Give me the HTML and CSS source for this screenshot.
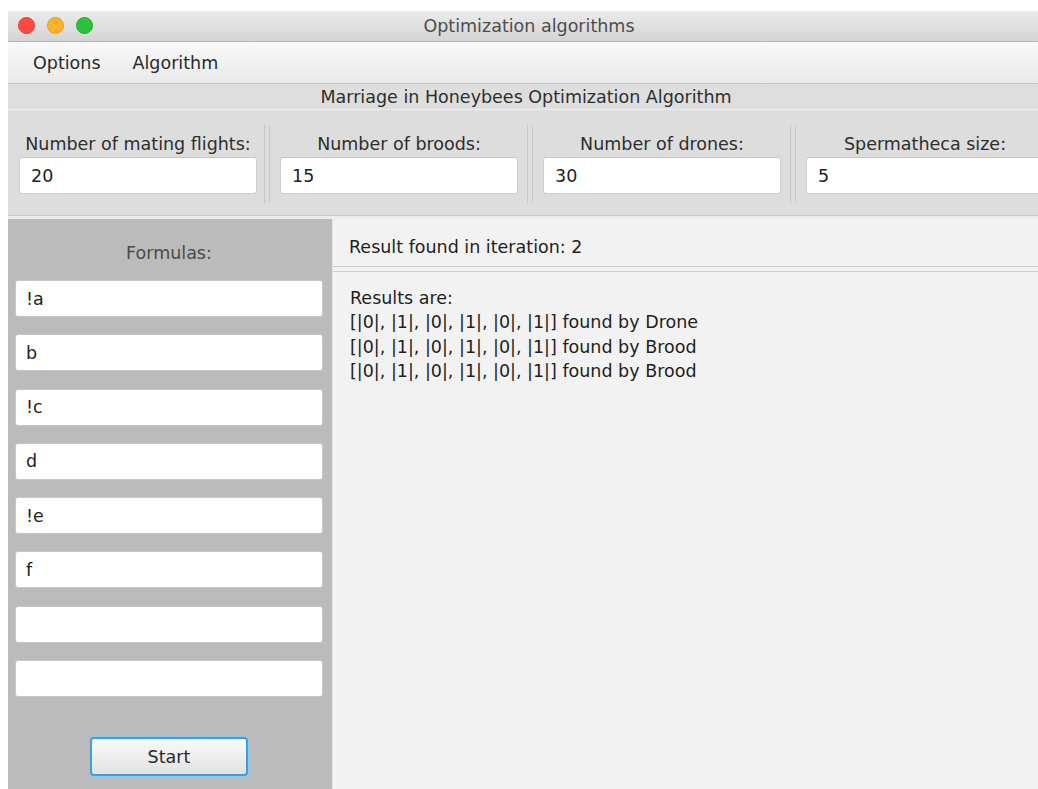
FILE: index.html
```html
<!DOCTYPE html>
<html lang="en">
<head>
<meta charset="utf-8">
<title>Optimization algorithms</title>
<link rel="stylesheet" href="styles.css">
</head>
<body>
<div class="window">
  <div class="titlebar">
    <div class="lights">
      <span class="light red"></span>
      <span class="light yellow"></span>
      <span class="light green"></span>
    </div>
    <div class="title">Optimization algorithms</div>
  </div>

  <div class="menubar">
    <span class="menu-item">Options</span>
    <span class="menu-item">Algorithm</span>
  </div>

  <div class="subtitle">Marriage in Honeybees Optimization Algorithm</div>

  <div class="params">
    <div class="param first">
      <div class="param-box">
        <label class="param-label">Number of mating flights:</label>
        <input class="field" type="text" value="20" readonly>
      </div>
    </div>
    <div class="param sep">
      <div class="param-box">
        <label class="param-label">Number of broods:</label>
        <input class="field" type="text" value="15" readonly>
      </div>
    </div>
    <div class="param sep">
      <div class="param-box">
        <label class="param-label">Number of drones:</label>
        <input class="field" type="text" value="30" readonly>
      </div>
    </div>
    <div class="param sep">
      <div class="param-box">
        <label class="param-label">Spermatheca size:</label>
        <input class="field" type="text" value="5" readonly>
      </div>
    </div>
  </div>
  <div class="params-rule"></div>

  <div class="main">
    <aside class="formulas">
      <div class="formulas-label">Formulas:</div>
      <div class="formula-list">
        <input class="field formula" type="text" value="!a" readonly>
        <input class="field formula" type="text" value="b" readonly>
        <input class="field formula" type="text" value="!c" readonly>
        <input class="field formula" type="text" value="d" readonly>
        <input class="field formula" type="text" value="!e" readonly>
        <input class="field formula" type="text" value="f" readonly>
        <input class="field formula" type="text" value="" readonly>
        <input class="field formula" type="text" value="" readonly>
      </div>
      <button class="start" type="button">Start</button>
    </aside>

    <section class="results">
      <div class="results-head">Result found in iteration: 2</div>
      <div class="results-body">
        <div>Results are:</div>
        <div>[|0|, |1|, |0|, |1|, |0|, |1|] found by Drone</div>
        <div>[|0|, |1|, |0|, |1|, |0|, |1|] found by Brood</div>
        <div>[|0|, |1|, |0|, |1|, |0|, |1|] found by Brood</div>
      </div>
    </section>
  </div>
</div>
</body>
</html>
```

FILE: styles.css
```css
* {
  box-sizing: border-box;
}

html, body {
  margin: 0;
  padding: 0;
  background: #ffffff;
}

body {
  font-family: "DejaVu Sans", Verdana, sans-serif;
  font-size: 17.5px;
  color: #222222;
  overflow: hidden;
}

.window {
  margin: 11px 0 0 8px;
  width: 1030px;
  height: 778px;
  display: flex;
  flex-direction: column;
  overflow: hidden;
  background: #dddddd;
}

/* title bar with traffic lights */
.titlebar {
  position: relative;
  height: 31px;
  flex: none;
  display: flex;
  align-items: center;
  justify-content: center;
  background: linear-gradient(#ebebeb, #d4d4d4);
  border-bottom: 1px solid #b4b4b4;
}

.lights {
  position: absolute;
  left: 10px;
  top: 6px;
  display: flex;
  gap: 12px;
}

.light {
  width: 17px;
  height: 17px;
  border-radius: 50%;
}

.red { background: #fc4a45; border: 1px solid #e33e3a; }
.yellow { background: #fdb227; border: 1px solid #e29d1f; }
.green { background: #2ac43a; border: 1px solid #20aa2e; }

.title {
  color: #4d4d4d;
  margin-left: 12px;
}

/* menu */
.menubar {
  height: 42px;
  flex: none;
  display: flex;
  align-items: center;
  gap: 32px;
  padding-left: 25px;
  background: linear-gradient(#f9f9f9, #e9e9e9);
  border-bottom: 1px solid #c2c2c2;
}

.menu-item {
  color: #2a2a2a;
}

.subtitle {
  height: 26px;
  flex: none;
  display: flex;
  align-items: center;
  justify-content: center;
  background: #dedede;
  border-bottom: 1px solid #ececec;
  color: #2e2e2e;
  padding-left: 6px;
}

/* parameter row */
.params {
  flex: none;
  height: 106px;
  display: grid;
  grid-template-columns: 256px repeat(3, 263px);
  padding-top: 15px;
  background: #dddddd;
  border-bottom: 1px solid #c9c9c9;
}

.params-rule {
  flex: none;
  height: 3px;
  background: #ededed;
}

.param {
  position: relative;
  height: 78px;
  padding: 8px 0 0 11px;
}

.param.sep {
  padding-left: 16px;
}

.param.sep::before {
  content: "";
  position: absolute;
  left: 0;
  top: 0;
  bottom: 0;
  width: 4px;
  border-left: 1px solid #c6c6c6;
  border-right: 1px solid #c6c6c6;
}

.param-box {
  width: 238px;
  display: flex;
  flex-direction: column;
}

.param-label {
  line-height: 22px;
  text-align: center;
  white-space: nowrap;
  color: #2e2e2e;
  margin-bottom: 2px;
}

.field {
  display: block;
  width: 100%;
  height: 37px;
  margin: 0;
  padding: 0 11px;
  border: 1px solid #cfcfcf;
  border-top-color: #c4c4c4;
  border-radius: 3px;
  background: #ffffff;
  font-family: inherit;
  font-size: 17.5px;
  color: #222222;
  outline: none;
}

/* lower area */
.main {
  flex: 1;
  display: flex;
  min-height: 0;
}

.formulas {
  width: 325px;
  flex: none;
  background: #bbbbbb;
  display: flex;
  flex-direction: column;
  align-items: center;
  padding: 23px 9px 0 7px;
  border-right: 1px solid #e4e4e4;
}

.formulas-label {
  line-height: 22px;
  color: #4a4a4a;
  margin-bottom: 16px;
}

.formula-list {
  width: 100%;
  display: flex;
  flex-direction: column;
  gap: 17.3px;
}

.formula {
  padding-left: 10px;
  border-color: #c6c6c6;
}

.start {
  margin-top: 40px;
  width: 158px;
  height: 39px;
  border: 2px solid #3f9fdc;
  border-radius: 4px;
  background: linear-gradient(#fafafa, #e2e2e2);
  box-shadow: 0 0 0 1px #8fc6ec;
  font-family: inherit;
  font-size: 17.5px;
  color: #2a2a2a;
  padding: 0;
}

.results {
  flex: 1;
  display: flex;
  flex-direction: column;
  background: #f2f2f2;
}

.results-head {
  height: 48px;
  flex: none;
  display: flex;
  align-items: center;
  padding-left: 16px;
  padding-top: 9px;
  padding-bottom: 0;
  border-bottom: 1px solid #cdcdcd;
  color: #1e1e1e;
}

.results-body {
  margin-top: 4px;
  border-top: 1px solid #cdcdcd;
  flex: 1;
  padding: 14px 0 0 17px;
  line-height: 24.3px;
  color: #1e1e1e;
}
```
